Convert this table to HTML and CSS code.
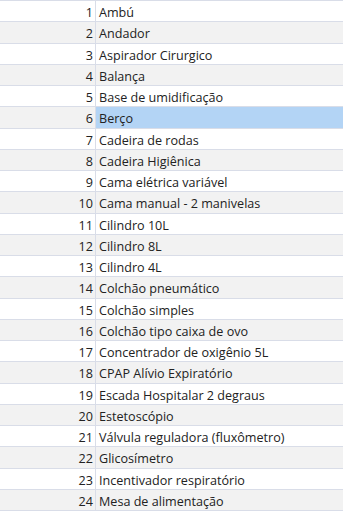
FILE: index.html
```html
<!DOCTYPE html>
<html>
<head>
<meta charset="utf-8">
<link rel="stylesheet" href="styles.css">
</head>
<body>
<div class="sheet">
  <div class="row"><div class="num">1</div><div class="name">Ambú</div></div>
  <div class="row"><div class="num">2</div><div class="name">Andador</div></div>
  <div class="row"><div class="num">3</div><div class="name">Aspirador Cirurgico</div></div>
  <div class="row"><div class="num">4</div><div class="name">Balança</div></div>
  <div class="row"><div class="num">5</div><div class="name">Base de umidificação</div></div>
  <div class="row selected"><div class="num">6</div><div class="name">Berço</div></div>
  <div class="row"><div class="num">7</div><div class="name">Cadeira de rodas</div></div>
  <div class="row"><div class="num">8</div><div class="name">Cadeira Higiênica</div></div>
  <div class="row"><div class="num">9</div><div class="name">Cama elétrica variável</div></div>
  <div class="row"><div class="num">10</div><div class="name">Cama manual - 2 manivelas</div></div>
  <div class="row"><div class="num">11</div><div class="name">Cilindro 10L</div></div>
  <div class="row"><div class="num">12</div><div class="name">Cilindro 8L</div></div>
  <div class="row"><div class="num">13</div><div class="name">Cilindro 4L</div></div>
  <div class="row"><div class="num">14</div><div class="name">Colchão pneumático</div></div>
  <div class="row"><div class="num">15</div><div class="name">Colchão simples</div></div>
  <div class="row"><div class="num">16</div><div class="name">Colchão tipo caixa de ovo</div></div>
  <div class="row"><div class="num">17</div><div class="name">Concentrador de oxigênio 5L</div></div>
  <div class="row"><div class="num">18</div><div class="name">CPAP Alívio Expiratório</div></div>
  <div class="row"><div class="num">19</div><div class="name">Escada Hospitalar 2 degraus</div></div>
  <div class="row"><div class="num">20</div><div class="name">Estetoscópio</div></div>
  <div class="row"><div class="num">21</div><div class="name">Válvula reguladora (fluxômetro)</div></div>
  <div class="row"><div class="num">22</div><div class="name">Glicosímetro</div></div>
  <div class="row"><div class="num">23</div><div class="name">Incentivador respiratório</div></div>
  <div class="row"><div class="num">24</div><div class="name">Mesa de alimentação</div></div>
</div>
</body>
</html>
```
FILE: styles.css
```css
html, body {
  margin: 0;
  padding: 0;
  background: #ffffff;
}
.sheet {
  width: 343px;
  height: 514px;
  overflow: hidden;
  font-family: "Open Sans", "Noto Sans", sans-serif;
  font-size: 12.6px;
  color: #222222;
  border-top: 1px solid #d9dde8;
  box-sizing: border-box;
}
.row {
  display: flex;
  height: 21.25px;
  box-sizing: border-box;
  border-bottom: 1px solid #d9dde8;
  background: #ffffff;
  overflow: hidden;
}
.row:nth-child(even) {
  background: #f2f2f2;
}
.num {
  width: 96px;
  box-sizing: border-box;
  padding-right: 2px;
  padding-top: 2px;
  text-align: right;
  border-right: 1px solid #d9dde8;
  line-height: 20px;
  flex: none;
}
.name {
  flex: 1;
  padding-left: 3px;
  padding-top: 2px;
  line-height: 20px;
  white-space: nowrap;
}
.row.selected .name {
  background: #b3d4f5;
}
```
